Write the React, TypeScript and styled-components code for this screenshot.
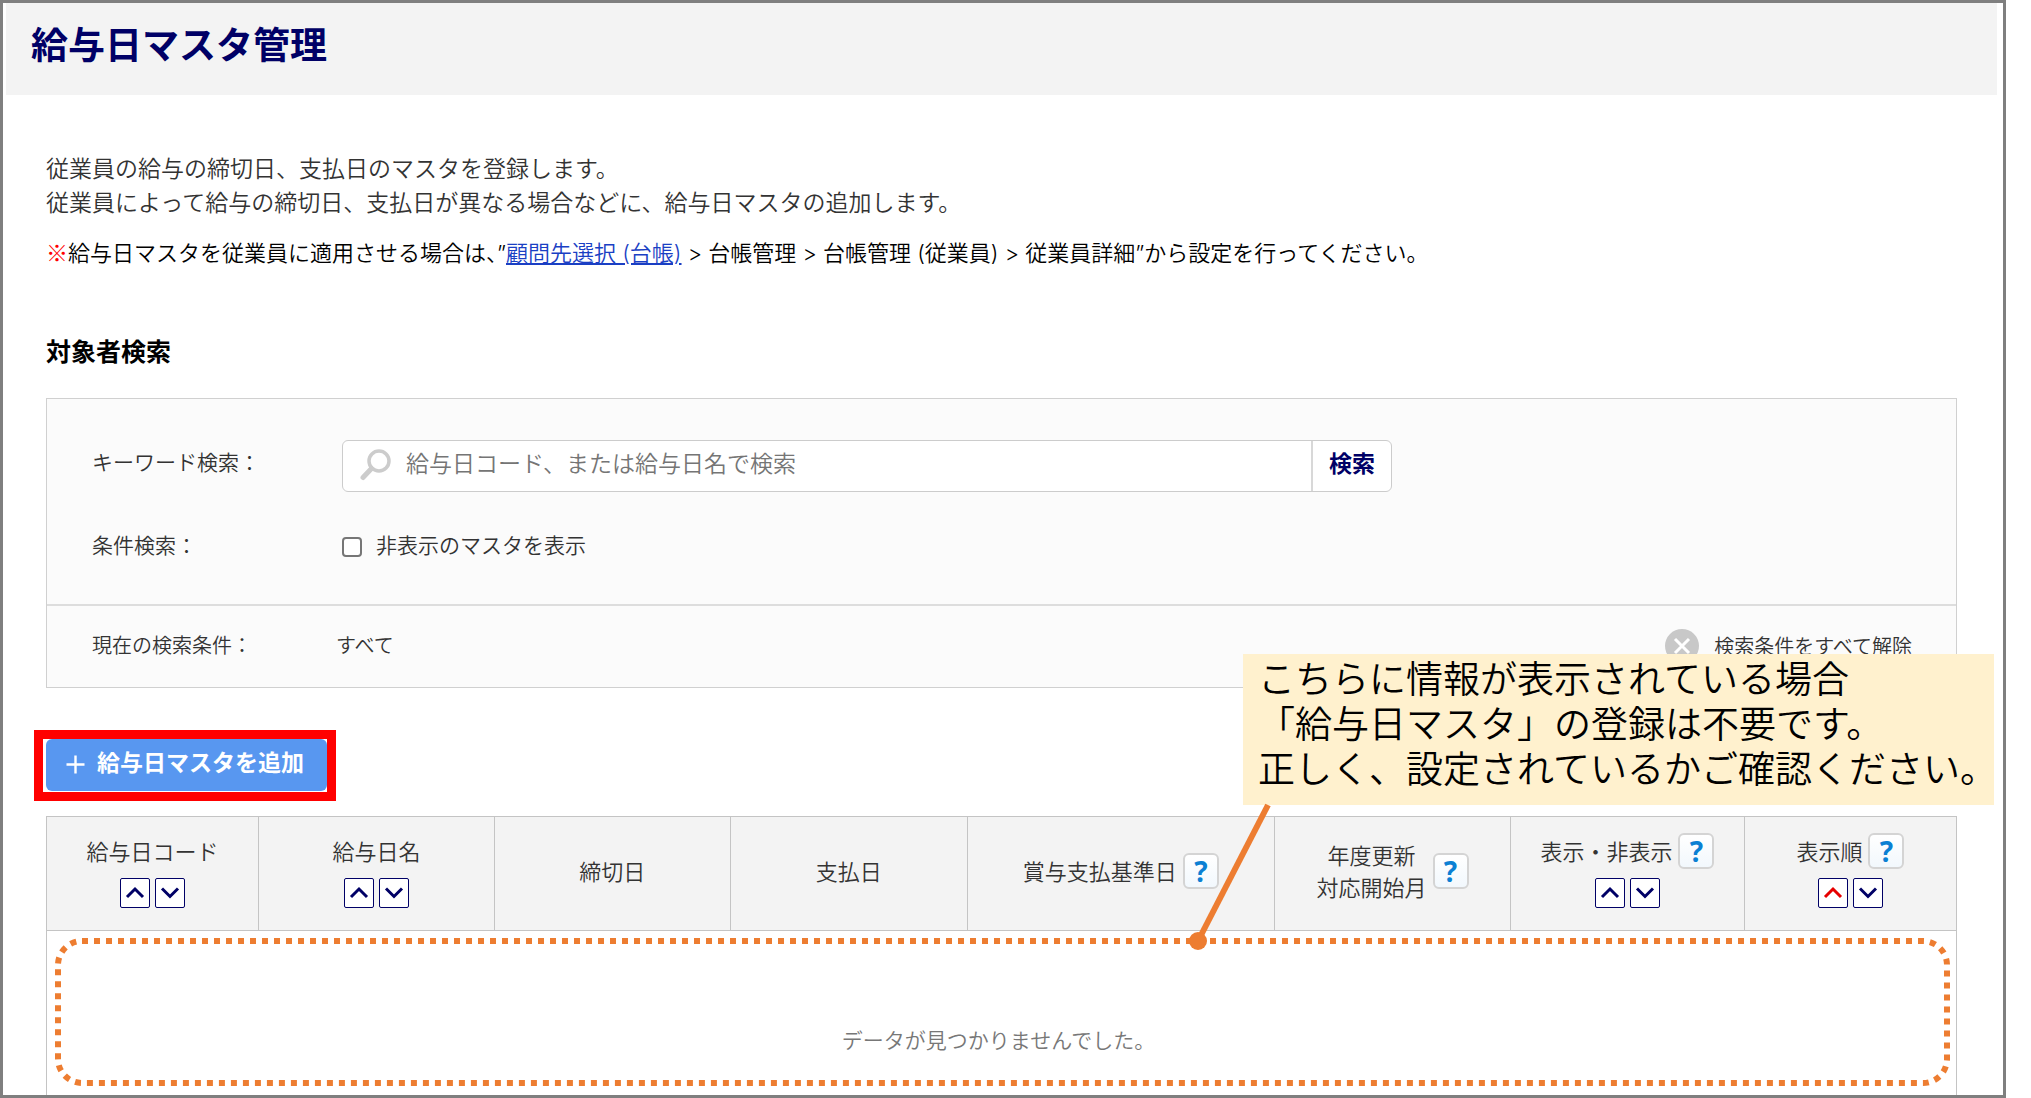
import React from 'react';
import styled, { createGlobalStyle, css } from 'styled-components';

const NAVY = '#000066';
const ORANGE = '#ed7d31';

const GlobalStyle = createGlobalStyle`
  *, *::before, *::after { box-sizing: border-box; }
  body {
    margin: 0;
    background: #fff;
    color: #333;
    font-family: 'Noto Sans', 'Noto Sans CJK JP', sans-serif;
    font-size: 22px;
    font-weight: 350;
    line-height: 34px;
  }
  button, input { font-family: inherit; font-weight: inherit; }
`;

const Frame = styled.div`
  height: 100vh;
  margin-right: 25px;
  padding: 0 6px 0 3px;
  border: 3px solid #7f7f7f;
  overflow: hidden;
`;

const Header = styled.header`
  padding: 16px 25px 24px;
  background: #f3f3f3;
`;

const Title = styled.h1`
  margin: 0;
  color: ${NAVY};
  font-size: 37px;
  line-height: 52px;
  font-weight: 700;
`;

const Main = styled.main`
  padding: 56px 40px 0;
`;

const Intro = styled.p`
  margin: 0;
  font-size: 23px;
`;

const Note = styled.p`
  margin: 17px 0 0;
  color: #000;
  font-family: Inter, 'Noto Sans CJK JP', sans-serif;
`;

const NoteMark = styled.strong`
  color: #f00;
  font-family: 'Noto Sans CJK JP', sans-serif;
  font-weight: 700;
  line-height: 1;
`;

const NoteLink = styled.a`
  color: #1a3fc4;
  text-decoration: underline;
`;

const SectionTitle = styled.h2`
  margin: 64px 0 30px;
  color: #000;
  font-size: 25px;
  line-height: 34px;
  font-weight: 700;
`;

const Panel = styled.form`
  border: 1px solid #d0d0d0;
  background: #fbfbfb;
`;

const Conditions = styled.div`
  display: grid;
  gap: 36px;
  padding: 41px 45px 42px;
  font-size: 21px;
`;

const Row = styled.div`
  display: grid;
  grid-template-columns: 250px 1fr;
  align-items: center;
`;

const KeywordLabel = styled.label`
  padding-bottom: 8px;
`;

const SearchGroup = styled.div`
  display: flex;
  max-width: 1050px;
  height: 52px;
  border: 1px solid #ccc;
  border-radius: 6px;
  background: #fff;
`;

const SearchField = styled.div`
  display: flex;
  flex: 1;
  align-items: center;
  gap: 14px;
  padding: 0 0 2px 17px;
`;

const SearchInput = styled.input`
  flex: 1;
  min-width: 0;
  height: 48px;
  padding: 0 0 4px;
  border: 0;
  outline: 0;
  background: none;
  color: #333;
  font-size: 23px;
  &::placeholder { color: #757575; opacity: 1; }
`;

const SearchButton = styled.button`
  width: 80px;
  padding: 0 0 8px;
  border: 0;
  border-left: 2px solid #d8d8d8;
  background: none;
  color: ${NAVY};
  font-size: 23px;
  font-weight: 700;
`;

const CheckLabel = styled.label`
  display: flex;
  align-items: center;
  gap: 14px;
`;

const CheckBox = styled.input`
  appearance: none;
  width: 20px;
  height: 20px;
  margin: 4px 0 0;
  border: 2px solid #767676;
  border-radius: 4px;
  background: #fff;
  &:checked { background: #5897f0; }
`;

const Current = styled.div`
  display: flex;
  align-items: center;
  height: 83px;
  padding: 0 44px 2px 45px;
  border-top: 2px solid #ddd;
  font-size: 20px;
`;

const CurrentLabel = styled.span`
  width: 244px;
`;

const ClearButton = styled.button`
  display: flex;
  align-items: center;
  gap: 15px;
  margin-left: auto;
  padding: 0;
  border: 0;
  background: none;
  color: #333;
  font-size: 20px;
`;

const Highlight = styled.div`
  width: max-content;
  margin: 42px 0 15px -12px;
  padding: 0 0 1px 3px;
  border: 9px solid #f00;
`;

const AddButton = styled.button`
  display: flex;
  align-items: center;
  gap: 12px;
  height: 52px;
  padding: 0 23px 8px 20px;
  border: 0;
  border-radius: 6px;
  background: #5897f0;
  color: #fff;
  font-size: 23px;
  font-weight: 700;
`;

const PlusIcon = styled.svg`
  margin-top: 6px;
`;

const TableArea = styled.section`
  position: relative;
`;

const Table = styled.table`
  width: 100%;
  table-layout: fixed;
  border-collapse: collapse;
  border: 1px solid #c4c4c4;
`;

const Col = styled.col<{ $share: number }>`
  width: ${(p) => p.$share}%;
`;

const HeadCell = styled.th`
  height: 114px;
  padding: 0 0 6px;
  border: 1px solid #c4c4c4;
  background: #f3f3f3;
  font-weight: inherit;
  line-height: 32px;
`;

const HeadStack = styled.div`
  display: flex;
  flex-direction: column;
  align-items: center;
  gap: 9px;
`;

const HeadLine = styled.div`
  display: flex;
  align-items: center;
  justify-content: center;
  gap: 6px;
  min-height: 36px;
`;

const SortGroup = styled.div`
  display: flex;
  gap: 5px;
`;

const iconButton = css`
  display: flex;
  align-items: center;
  justify-content: center;
  flex: none;
  padding: 0;
`;

const SortButton = styled.button<{ $active?: boolean }>`
  ${iconButton}
  width: 30px;
  height: 30px;
  border: 1px solid ${NAVY};
  border-radius: 2px;
  background: #fff;
  color: ${(p) => (p.$active ? '#e60000' : NAVY)};
`;

const HelpButton = styled.button`
  ${iconButton}
  width: 36px;
  height: 36px;
  border: 2px solid #d4d4d4;
  border-radius: 6px;
  background: linear-gradient(#fff, #f2f8fd);
  color: #0b80d3;
  font-size: 28px;
  line-height: 30px;
  font-weight: 700;
`;

const EmptyCell = styled.td`
  position: relative;
  height: 218px;
  padding: 0 6px 0 0;
  color: #777;
  font-size: 21px;
  text-align: center;
`;

const DottedOutline = styled.svg`
  position: absolute;
  top: 7px;
  left: 8px;
  width: calc(100% - 14px);
  height: 148px;
  overflow: visible;
`;

const OutlineRect = styled.rect`
  width: calc(100% - 6px);
  height: 142px;
  fill: none;
  stroke: ${ORANGE};
  stroke-width: 6px;
  stroke-dasharray: 6 6;
`;

const Callout = styled.aside`
  position: absolute;
  top: -162px;
  right: -37px;
  width: 751px;
  padding: 2px 0 14px 15px;
  background: #fff1ce;
  color: #000;
  font-size: 37px;
  line-height: 45px;
  white-space: nowrap;
`;

const Connector = styled.svg`
  position: absolute;
  top: 147px;
  left: -54px;
`;

type Column = {
  lines: string[];
  share: number;
  help?: boolean;
  sort?: boolean;
  activeUp?: boolean;
};

const columns: Column[] = [
  { lines: ['給与日コード'], share: 11.1, sort: true },
  { lines: ['給与日名'], share: 12.35, sort: true },
  { lines: ['締切日'], share: 12.35 },
  { lines: ['支払日'], share: 12.4 },
  { lines: ['賞与支払基準日'], share: 16.1, help: true },
  { lines: ['年度更新', '対応開始月'], share: 12.35, help: true },
  { lines: ['表示・非表示'], share: 12.25, help: true, sort: true },
  { lines: ['表示順'], share: 11.1, help: true, sort: true, activeUp: true },
];

function Chevron({ down }: { down?: boolean }) {
  return (
    <svg width="20" height="14" viewBox="0 0 20 14" aria-hidden="true">
      <path
        d={down ? 'M2 2.5 L10 10.5 L18 2.5' : 'M2 11 L10 3 L18 11'}
        fill="none"
        stroke="currentColor"
        strokeWidth="3"
      />
    </svg>
  );
}

function SortButtons({ label, activeUp }: { label: string; activeUp?: boolean }) {
  return (
    <SortGroup>
      <SortButton type="button" $active={activeUp} aria-label={`${label} 昇順`}>
        <Chevron />
      </SortButton>
      <SortButton type="button" aria-label={`${label} 降順`}>
        <Chevron down />
      </SortButton>
    </SortGroup>
  );
}

function ColumnHead({ column }: { column: Column }) {
  return (
    <HeadCell scope="col">
      <HeadStack>
        <HeadLine>
          <div>
            {column.lines.map((line) => (
              <div key={line}>{line}</div>
            ))}
          </div>
          {column.help && <HelpButton type="button">?</HelpButton>}
        </HeadLine>
        {column.sort && <SortButtons label={column.lines[0]} activeUp={column.activeUp} />}
      </HeadStack>
    </HeadCell>
  );
}

export default function App() {
  return (
    <>
      <GlobalStyle />
      <Frame>
        <Header>
          <Title>給与日マスタ管理</Title>
        </Header>
        <Main>
          <Intro>
            従業員の給与の締切日、支払日のマスタを登録します。
            <br />
            従業員によって給与の締切日、支払日が異なる場合などに、給与日マスタの追加します。
          </Intro>
          <Note>
            <NoteMark>※</NoteMark>給与日マスタを従業員に適用させる場合は、”
            <NoteLink href="#clients">顧問先選択 (台帳)</NoteLink>
            {' > 台帳管理 > 台帳管理 (従業員) > 従業員詳細”から設定を行ってください。'}
          </Note>

          <SectionTitle>対象者検索</SectionTitle>
          <Panel onSubmit={(e: React.FormEvent) => e.preventDefault()}>
            <Conditions>
              <Row>
                <KeywordLabel htmlFor="keyword">キーワード検索：</KeywordLabel>
                <SearchGroup>
                  <SearchField>
                    <svg width="32" height="32" viewBox="0 0 32 32" aria-hidden="true">
                      <circle cx="19" cy="12" r="10" fill="none" stroke="#ccc" strokeWidth="3.5" />
                      <path d="M11.5 19.5 L3 28.5" stroke="#ccc" strokeWidth="5" strokeLinecap="round" />
                    </svg>
                    <SearchInput
                      id="keyword"
                      type="text"
                      placeholder="給与日コード、または給与日名で検索"
                    />
                  </SearchField>
                  <SearchButton type="submit">検索</SearchButton>
                </SearchGroup>
              </Row>
              <Row>
                <span>条件検索：</span>
                <CheckLabel>
                  <CheckBox type="checkbox" />
                  非表示のマスタを表示
                </CheckLabel>
              </Row>
            </Conditions>
            <Current>
              <CurrentLabel>現在の検索条件：</CurrentLabel>
              <span>すべて</span>
              <ClearButton type="reset">
                <svg width="34" height="34" viewBox="0 0 34 34" aria-hidden="true">
                  <circle cx="17" cy="17" r="17" fill="#c8c8c8" />
                  <path d="M10 10 L24 24 M24 10 L10 24" stroke="#fff" strokeWidth="3" />
                </svg>
                検索条件をすべて解除
              </ClearButton>
            </Current>
          </Panel>

          <Highlight>
            <AddButton type="button">
              <PlusIcon width="19" height="19" viewBox="0 0 19 19" aria-hidden="true">
                <path d="M9.5 0.5 V18.5 M0.5 9.5 H18.5" stroke="#fff" strokeWidth="2.4" />
              </PlusIcon>
              給与日マスタを追加
            </AddButton>
          </Highlight>

          <TableArea>
            <Table>
              <colgroup>
                {columns.map((c) => (
                  <Col key={c.lines[0]} $share={c.share} />
                ))}
              </colgroup>
              <thead>
                <tr>
                  {columns.map((c) => (
                    <ColumnHead key={c.lines[0]} column={c} />
                  ))}
                </tr>
              </thead>
              <tbody>
                <tr>
                  <EmptyCell colSpan={columns.length}>
                    データが見つかりませんでした。
                    <DottedOutline aria-hidden="true">
                      <OutlineRect x="3" y="3" rx="24" />
                    </DottedOutline>
                  </EmptyCell>
                </tr>
              </tbody>
            </Table>
            <Callout>
              こちらに情報が表示されている場合
              <br />
              「給与日マスタ」の登録は不要です。
              <br />
              正しく、設定されているかご確認ください。
              <Connector width="90" height="150" viewBox="0 0 90 150" aria-hidden="true">
                <path d="M79 4 L9 140" stroke={ORANGE} strokeWidth="6" />
                <circle cx="9" cy="140" r="9" fill={ORANGE} />
              </Connector>
            </Callout>
          </TableArea>
        </Main>
      </Frame>
    </>
  );
}
